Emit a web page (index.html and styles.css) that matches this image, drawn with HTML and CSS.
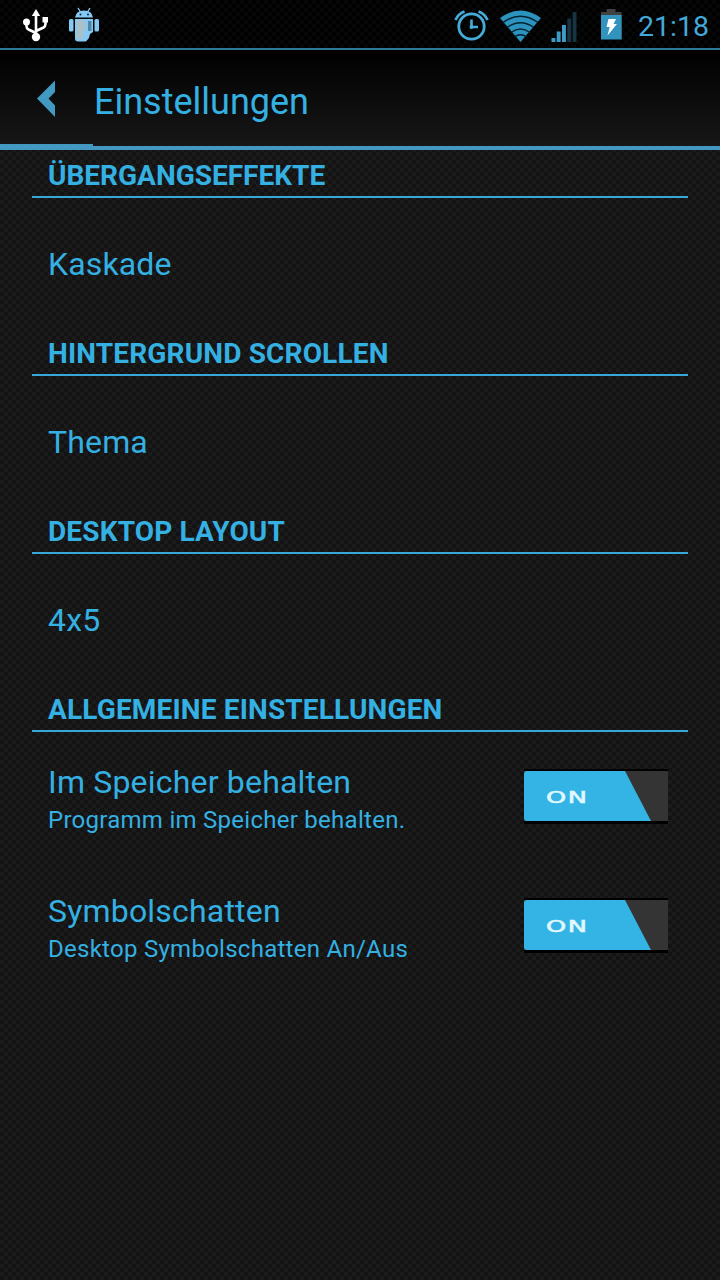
FILE: index.html
```html
<!DOCTYPE html>
<html lang="de">
<head>
<meta charset="utf-8">
<title>Einstellungen</title>
<link rel="stylesheet" href="styles.css">
</head>
<body>
<header class="status">
  <svg width="110" height="48" viewBox="0 0 110 48">
    <g stroke="#fff" stroke-width="2.600" fill="none">
      <path d="M36 14V36M36 33L28.500 29.500Q26.500 28.500 26.500 26V22M36 31L43.500 27.500Q45.500 26.500 45.500 24V20"/>
    </g>
    <path d="M36 9l4.200 7h-8.400z" fill="#fff"/>
    <circle cx="36" cy="37" r="4.200" fill="#fff"/>
    <circle cx="26.500" cy="22" r="3.500" fill="#fff"/>
    <path d="M42.500 17h5.500v5.500h-5.500z" fill="#fff"/>
    <path d="M75 17.500Q76 10.500 84 10.500T93 17.500z" fill="#85c9f3"/>
    <path d="M78 8l2.500 4M90 8l-2.500 4" stroke="#85c9f3" stroke-width="1.400"/>
    <circle cx="80.500" cy="14.500" r="1" fill="#05283c"/><circle cx="88" cy="14.500" r="1" fill="#05283c"/>
    <rect x="69" y="19" width="4.500" height="12.500" rx="1.500" fill="#85c9f3"/>
    <rect x="94.500" y="19" width="4.500" height="12.500" rx="1.500" fill="#85c9f3"/>
    <path d="M75 19h18v13l-3 2-1 4-3 3.500H78q-3 0-3-3z" fill="#85c9f3"/>
    <path d="M76.500 21q5-3 8 0l2 6-3 5-1 7h-5q-1 0-1-2z" fill="#a9bfca"/>
    <path d="M88 21h3.500v10h-3.500z" fill="#4f86a8"/>
  </svg>
  <div class="status-right">
    <svg width="180" height="48" viewBox="450 0 180 48">
      <g fill="none" stroke="#45abd8" stroke-width="2.800">
        <circle cx="471.500" cy="26.500" r="12.700"/>
        <path d="M455.500 20Q458 14 464.500 11.500M487.500 20Q485 14 478.500 11.500"/>
        <path d="M471.500 19.500V27H478" stroke-width="2.600"/>
      </g>
      <circle cx="471.500" cy="27" r="2" fill="#45abd8"/>
      <path d="M500 18Q520.500 3 541 18L520.500 42z" fill="#2b93bd"/>
      <g fill="none" stroke="#03212e" stroke-width="1.500">
        <path d="M503 22.500Q520.500 10 538 22.500M507 27.500Q520.500 18 534 27.500M511 32.500Q520.500 25.500 530 32.500M514.500 36.800Q520.500 32.500 526.500 36.800"/>
      </g>
      <g fill="#3c9cc8">
        <rect x="551.500" y="38" width="3.900" height="4"/>
        <rect x="556.700" y="31.500" width="3.900" height="10.500"/>
        <rect x="562" y="25" width="3.900" height="17"/>
      </g>
      <g fill="#173442">
        <rect x="567.300" y="18.500" width="3.900" height="23.500"/>
        <rect x="572.600" y="12" width="3.900" height="30"/>
      </g>
      <path d="M606.500 9h9v3h6v4h-20.500v-4h5.500z" fill="#414141"/>
      <rect x="601" y="15" width="20.700" height="24.500" fill="#3294bd"/>
      <path d="M608.500 19h7.500l-2.500 5h3.500l-9.500 11.500 2.200-8.500h-3.200z" fill="#fff"/>
    </svg>
    <span class="clock">21:18</span>
  </div>
</header>
<div class="titlebar">
  <svg width="94" height="94" viewBox="0 0 94 94"><path d="M55 30.500V42L48.500 48.500 55 55.500V67L37 48.500z" fill="#429ac3"/></svg>
  <h1 class="title">Einstellungen</h1>
</div>
<main class="settings">
  <h2 class="section first">ÜBERGANGSEFFEKTE</h2>
  <div class="item">Kaskade</div>
  <h2 class="section">HINTERGRUND SCROLLEN</h2>
  <div class="item">Thema</div>
  <h2 class="section">DESKTOP LAYOUT</h2>
  <div class="item">4x5</div>
  <h2 class="section">ALLGEMEINE EINSTELLUNGEN</h2>
  <div class="row">
    <div class="labels"><div class="name">Im Speicher behalten</div><div class="summary">Programm im Speicher behalten.</div></div>
    <div class="toggle"><div class="thumb"><span class="on">ON</span></div></div>
  </div>
  <div class="row">
    <div class="labels"><div class="name">Symbolschatten</div><div class="summary">Desktop Symbolschatten An/Aus</div></div>
    <div class="toggle"><div class="thumb"><span class="on">ON</span></div></div>
  </div>
</main>
</body>
</html>
```

FILE: styles.css
```css
* { box-sizing: border-box; }
body {
  margin: 0;
  width: 720px;
  height: 1280px;
  overflow: hidden;
  font-family: Roboto, "Noto Sans", sans-serif;
  color: #35b0e2;
  background: repeating-conic-gradient(#131313 0 25%, #1b1b1b 0 50%) 0 0 / 8px 8px;
}
svg { display: block; }
.status {
  height: 50px;
  display: flex;
  justify-content: space-between;
  background: repeating-conic-gradient(#010101 0 25%, #070707 0 50%) 0 0 / 8px 8px;
  border-bottom: 2px solid #2f7897;
}
.status-right { display: flex; }
.clock {
  width: 90px;
  padding-left: 8px;
  font-size: 28.5px;
  line-height: 54px;
  color: #43a9d9;
  white-space: nowrap;
}
.titlebar {
  height: 100px;
  display: flex;
  background: linear-gradient(90deg, #4399c2 93px, transparent 93px) 0 94px / 100% 2px no-repeat, linear-gradient(#000, #171717);
  border-bottom: 4px solid #4399c2;
}
.title {
  margin: 0;
  font-size: 36px;
  font-weight: 400;
  line-height: 104px;
}
.settings { padding: 0 32px; }
.section {
  margin: 0;
  height: 48px;
  padding-left: 16px;
  font-size: 28px;
  font-weight: 700;
  line-height: 52px;
  letter-spacing: 0.16px;
  border-bottom: 2px solid #3ba6da;
  white-space: nowrap;
}
.first { letter-spacing: 0; }
.item {
  height: 130px;
  padding-left: 16px;
  font-size: 32px;
  line-height: 132px;
  letter-spacing: 0.15px;
}
.row {
  height: 129px;
  display: flex;
  justify-content: space-between;
  padding: 31px 20px 0 16px;
}
.labels { white-space: nowrap; }
.name { font-size: 32px; line-height: 38px; letter-spacing: 0.19px; }
.summary { font-size: 24px; line-height: 38px; letter-spacing: 0.27px; }
.toggle {
  width: 144px;
  height: 55px;
  margin-top: 6px;
  background: #343434;
  border-top: 2px solid #000;
  border-bottom: 3px solid #000;
}
.thumb {
  width: 127px;
  height: 50px;
  background: #34b4e5;
  border-radius: 3px 0 0 3px;
  clip-path: polygon(0 0, 101px 0, 127px 100%, 0 100%);
  padding-left: 22px;
}
.on {
  display: inline-block;
  font: 400 16px/53px "DejaVu Sans", sans-serif;
  -webkit-text-stroke: 0.6px #e0f8ff;
  letter-spacing: 1px;
  color: #e0f8ff;
  transform: scaleX(1.6);
  transform-origin: left center;
}
```
